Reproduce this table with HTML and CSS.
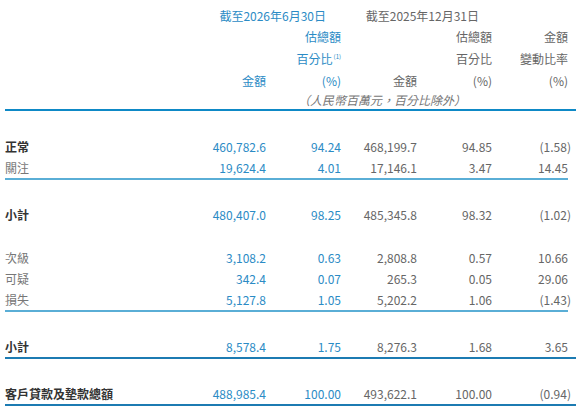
FILE: index.html
```html
<!DOCTYPE html>
<html lang="zh-Hant">
<head>
<meta charset="utf-8">
<link rel="stylesheet" href="styles.css">
</head>
<body>
<div class="sheet">
  <div class="hrow r1">
    <div class="period cur">截至2026年6月30日</div>
    <div class="period prev">截至2025年12月31日</div>
  </div>
  <div class="hrow">
    <div></div><div></div><div class="blue">估總額</div><div></div><div>估總額</div><div class="last">金額</div>
  </div>
  <div class="hrow">
    <div></div><div></div><div class="blue">百分比<sup>(1)</sup></div><div></div><div>百分比</div><div class="last">變動比率</div>
  </div>
  <div class="hrow">
    <div></div><div class="blue">金額</div><div class="blue">(%)</div><div>金額</div><div>(%)</div><div class="last">(%)</div>
  </div>
  <div class="hrow r5">
    <div class="note">（人民幣百萬元，百分比除外）</div>
  </div>
  <div class="rule main"></div>

  <div class="gap g1"></div>
  <div class="drow"><div class="lab strong">正常</div><div class="blue">460,782.6</div><div class="blue">94.24</div><div>468,199.7</div><div>94.85</div><div class="last">(1.58<span class="cp">)</span></div></div>
  <div class="drow"><div class="lab">關注</div><div class="blue">19,624.4</div><div class="blue">4.01</div><div>17,146.1</div><div>3.47</div><div class="last">14.45</div></div>
  <div class="rule light"></div>

  <div class="gap g2"></div>
  <div class="drow"><div class="lab strong">小計</div><div class="blue">480,407.0</div><div class="blue">98.25</div><div>485,345.8</div><div>98.32</div><div class="last">(1.02<span class="cp">)</span></div></div>

  <div class="gap g3"></div>
  <div class="drow"><div class="lab">次級</div><div class="blue">3,108.2</div><div class="blue">0.63</div><div>2,808.8</div><div>0.57</div><div class="last">10.66</div></div>
  <div class="drow"><div class="lab">可疑</div><div class="blue">342.4</div><div class="blue">0.07</div><div>265.3</div><div>0.05</div><div class="last">29.06</div></div>
  <div class="drow"><div class="lab">損失</div><div class="blue">5,127.8</div><div class="blue">1.05</div><div>5,202.2</div><div>1.06</div><div class="last">(1.43<span class="cp">)</span></div></div>
  <div class="rule light"></div>

  <div class="gap g4"></div>
  <div class="drow"><div class="lab strong">小計</div><div class="blue">8,578.4</div><div class="blue">1.75</div><div>8,276.3</div><div>1.68</div><div class="last">3.65</div></div>
  <div class="rule dark"></div>

  <div class="gap g5"></div>
  <div class="drow tot"><div class="lab strong">客戶貸款及墊款總額</div><div class="blue">488,985.4</div><div class="blue">100.00</div><div>493,622.1</div><div>100.00</div><div class="last">(0.94<span class="cp">)</span></div></div>
  <div class="rule dark"></div>
</div>
</body>
</html>
```

FILE: styles.css
```css
html, body {
  margin: 0;
  padding: 0;
  background: #ffffff;
}

body {
  font-family: "Noto Sans CJK TC", "Noto Sans", sans-serif;
  font-size: 12px;
  color: #666666;
}

.sheet {
  width: 571px;
  margin-left: 5px;
  padding-top: 4.5px;
}

.hrow,
.drow {
  display: grid;
  grid-template-columns: 185px 76px 75px 76px 75px 84px;
  height: 21.7px;
  line-height: 21.7px;
  text-align: right;
  white-space: nowrap;
}

.drow {
  height: 21px;
  line-height: 21px;
}

.drow.tot {
  height: 20px;
  line-height: 20px;
}

.hrow.r5 {
  height: 18px;
  line-height: 18px;
}

.last {
  padding-right: 8px;
}

.blue {
  color: #2b8bc5;
}

.period {
  grid-column: span 2;
  text-align: right;
}

.period.cur {
  grid-column: 2 / span 2;
  color: #2b8bc5;
  padding-right: 15px;
}

.period.prev {
  grid-column: 4 / span 2;
  padding-right: 13px;
}

.note {
  grid-column: 1 / -1;
  text-align: left;
  padding-left: 293px;
  font-style: italic;
  color: #777777;
}

sup {
  font-size: 6px;
  line-height: 0;
  vertical-align: 5px;
  margin-left: 1px;
}

.lab {
  text-align: left;
  color: #777777;
}

.lab.strong {
  color: #333333;
  font-weight: 700;
}

.cp {
  margin-right: -3px;
}

.rule {
  height: 2px;
}

.rule.main {
  background: #0e89c6;
}

.rule.light {
  width: 563px;
  height: 1.5px;
  background: #5aaed6;
}

.rule.dark {
  background: #1c7bb2;
}

.gap.g1 { height: 25px; }
.gap.g2 { height: 24.5px; }
.gap.g3 { height: 22px; }
.gap.g4 { height: 24px; }
.gap.g5 { height: 25px; }
```
